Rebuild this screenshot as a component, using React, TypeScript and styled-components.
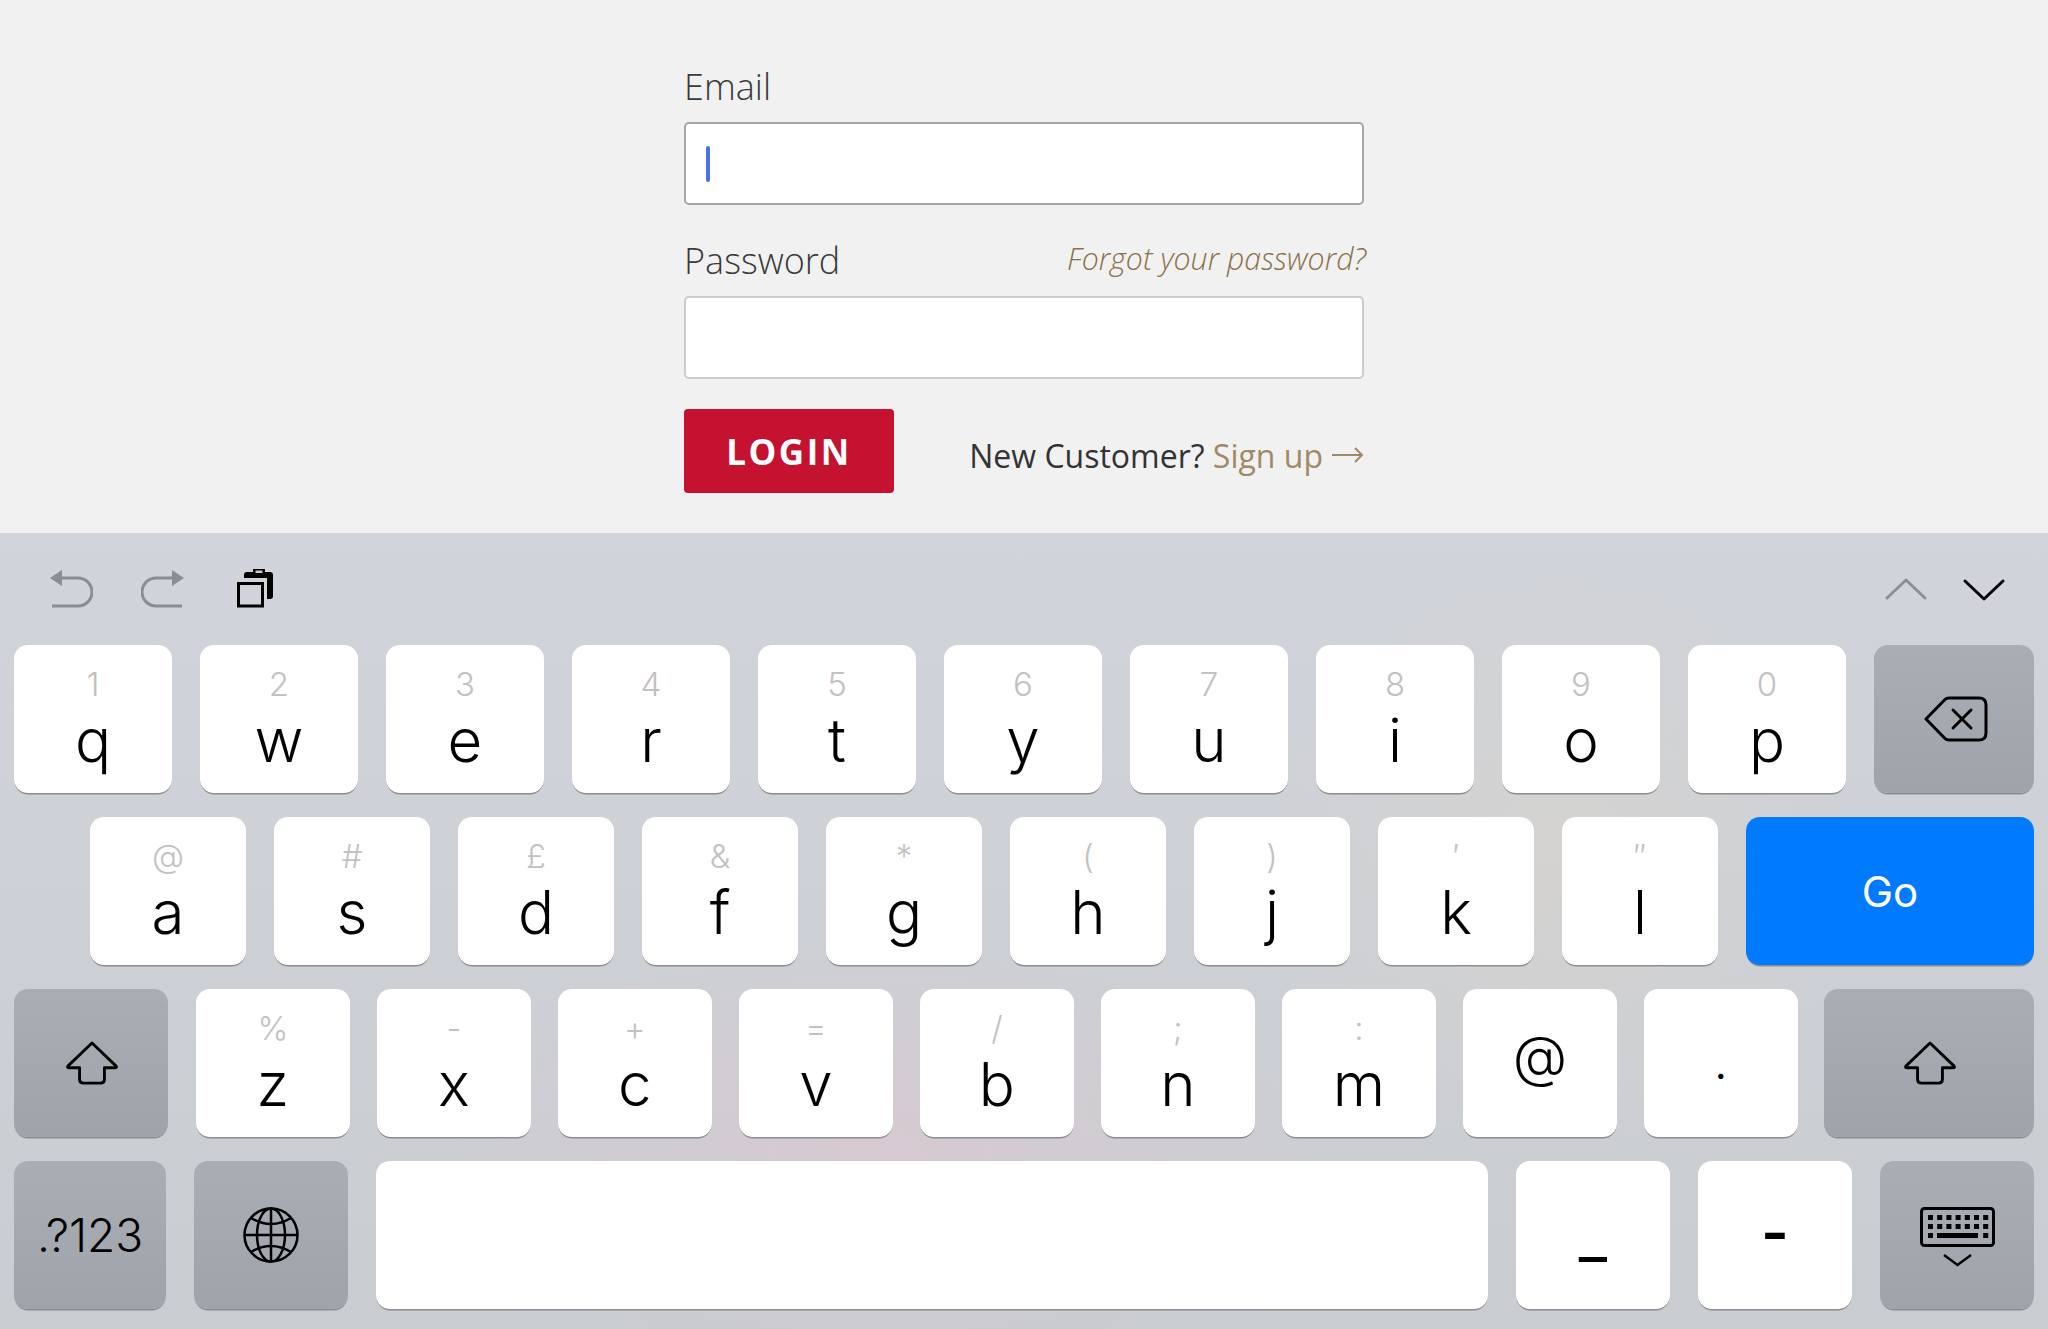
import React from "react";
import styled, { createGlobalStyle } from "styled-components";

const GlobalStyle = createGlobalStyle`
    html, body {
        margin: 0;
        padding: 0;
        background: #f1f1f1;
    }
`;

const Page = styled.div`
    width: 2048px;
    height: 1329px;
    display: flex;
    flex-direction: column;
    overflow: hidden;
`;

const FormArea = styled.div`
    height: 533px;
    background: #f1f1f1;
    display: flex;
    justify-content: center;
    font-family: "Open Sans", sans-serif;
`;

const Form = styled.form`
    width: 680px;
    padding-top: 62px;
`;

const LabelRow = styled.div`
    height: 60px;
    display: flex;
    justify-content: space-between;
    align-items: flex-start;
    margin-right: -2px;
`;

const Label = styled.label`
    font-size: 36px;
    font-weight: 300;
    line-height: 50px;
    color: #3a3a3a;
`;

const ForgotLink = styled.a`
    font-size: 30.3px;
    font-weight: 300;
    font-style: italic;
    line-height: 46px;
    color: #8a7249;
`;

const Field = styled.div<{ $focused?: boolean }>`
    height: 83px;
    box-sizing: border-box;
    border: 2px solid ${(p) => (p.$focused ? "#a6a6a6" : "#cccccc")};
    border-radius: 5px;
    background: #ffffff;
    display: flex;
    align-items: center;
    padding-left: 20px;
    margin-bottom: ${(p) => (p.$focused ? "31px" : "30px")};
`;

const Caret = styled.div`
    width: 4px;
    height: 36px;
    border-radius: 2px;
    background: #4a6ff0;
`;

const FormFooter = styled.div`
    display: flex;
    justify-content: space-between;
    align-items: center;
`;

const LoginButton = styled.button`
    width: 210px;
    height: 84px;
    border: 0;
    border-radius: 4px;
    background: #c41230;
    color: #ffffff;
    font-family: inherit;
    font-size: 35px;
    font-weight: 700;
    letter-spacing: 2.5px;
`;

const SignUpText = styled.div`
    font-size: 32px;
    font-weight: 400;
    color: #333333;
    display: flex;
    align-items: center;
    gap: 9px;
    padding-top: 8px;
`;

const SignUpLink = styled.a`
    color: #a08a66;
`;

const Keyboard = styled.div`
    flex: 1;
    display: flex;
    flex-direction: column;
    font-family: Inter, "Liberation Sans", sans-serif;
    background:
        radial-gradient(ellipse 440px 210px at 880px 620px, rgba(224, 198, 208, 0.6), rgba(224, 198, 208, 0)),
        radial-gradient(ellipse 300px 300px at 1560px 330px, rgba(222, 214, 200, 0.4), rgba(222, 214, 200, 0)),
        linear-gradient(#d1d4da, #c9ccd1);
`;

const Toolbar = styled.div`
    height: 112px;
    display: flex;
    justify-content: space-between;
    align-items: center;
    padding: 0 42px 0 49px;
`;

const ToolGroup = styled.div<{ $gap: number }>`
    display: flex;
    gap: ${(p) => p.$gap}px;
`;

const ToolIcon = styled.svg<{ $flip?: boolean }>`
    width: 44px;
    height: 44px;
    display: block;
    transform: ${(p) => (p.$flip ? "scaleX(-1)" : "none")};
`;

const Rows = styled.div`
    display: flex;
    flex-direction: column;
    gap: 24px;
    padding: 0 14px;
`;

const Row = styled.div<{ $gap: number; $indent?: number }>`
    display: flex;
    gap: ${(p) => p.$gap}px;
    padding-left: ${(p) => p.$indent ?? 0}px;
`;

const Key = styled.div<{ $width: number; $tone?: "plain" | "dark" | "blue"; $after?: number }>`
    width: ${(p) => p.$width}px;
    height: 148px;
    flex: none;
    box-sizing: border-box;
    margin-right: ${(p) => p.$after ?? 0}px;
    border-radius: 14px;
    background: ${(p) =>
        p.$tone === "dark"
            ? "linear-gradient(#a9adb4, #9fa4ab)"
            : p.$tone === "blue"
              ? "#007aff"
              : "#ffffff"};
    box-shadow: 0 2px 0 -0.5px #8c8d90;
    display: flex;
    flex-direction: column;
    align-items: center;
    color: #000000;
`;

const CenterKey = styled(Key)`
    justify-content: center;
`;

const Hint = styled.div`
    height: 40px;
    margin-top: 19px;
    font-size: 33px;
    font-weight: 300;
    line-height: 40px;
    color: #c2c2c2;
`;

const Letter = styled.div`
    font-size: 60px;
    font-weight: 350;
    line-height: 70px;
    margin-top: 1px;
`;

const SymbolGlyph = styled.div<{ $top: number; $size: number; $weight?: number }>`
    margin-top: ${(p) => p.$top}px;
    font-size: ${(p) => p.$size}px;
    font-weight: ${(p) => p.$weight ?? 300};
    line-height: 60px;
`;

const KeyLabel = styled.div<{ $size: number; $color?: string; $weight?: number }>`
    font-size: ${(p) => p.$size}px;
    font-weight: ${(p) => p.$weight ?? 300};
    color: ${(p) => p.$color ?? "#000000"};
`;

const KeyIcon = styled.svg<{ $width: number; $height: number; $shift?: number }>`
    width: ${(p) => p.$width}px;
    height: ${(p) => p.$height}px;
    display: block;
    margin-left: ${(p) => p.$shift ?? 0}px;
`;

const ROW_ONE = [
    ["1", "q"], ["2", "w"], ["3", "e"], ["4", "r"], ["5", "t"],
    ["6", "y"], ["7", "u"], ["8", "i"], ["9", "o"], ["0", "p"],
];
const ROW_TWO = [
    ["@", "a"], ["#", "s"], ["£", "d"], ["&", "f"], ["*", "g"],
    ["(", "h"], [")", "j"], ["′", "k"], ["″", "l"],
];
const ROW_THREE = [
    ["%", "z"], ["-", "x"], ["+", "c"], ["=", "v"], ["/", "b"], [";", "n"], [":", "m"],
];

function UndoIcon(props: { flip?: boolean }) {
    return (
        <ToolIcon viewBox="0 0 44 44" $flip={props.flip}>
            <path d="M1 11 L13 3 V19 Z" fill="#8a8e92" />
            <path d="M12 11 H29 A14 14 0 0 1 29 39 H3" fill="none" stroke="#8a8e92" strokeWidth="3" />
        </ToolIcon>
    );
}

function PasteIcon() {
    return (
        <ToolIcon viewBox="0 0 44 44">
            <path d="M11 11 V8 a3 3 0 0 1 3 -3 H37 a3 3 0 0 1 3 3 V29 a3 3 0 0 1 -3 3 H34 V11 Z" fill="#000" />
            <rect x="20" y="2" width="12" height="6" fill="#000" />
            <rect x="22.5" y="3.5" width="7" height="2.5" fill="#c9ccd2" />
            <rect x="5.5" y="16.5" width="24" height="22.5" fill="none" stroke="#000" strokeWidth="3" />
        </ToolIcon>
    );
}

function Chevron(props: { up?: boolean; color: string }) {
    return (
        <ToolIcon viewBox="0 0 44 44">
            <path
                d={props.up ? "M3 21 L22 3 L41 21" : "M3 3 L22 21 L41 3"}
                transform={props.up ? "translate(0 10)" : "translate(0 11)"}
                fill="none"
                stroke={props.color}
                strokeWidth="3"
                strokeLinecap="round"
                strokeLinejoin="round"
            />
        </ToolIcon>
    );
}

function DeleteIcon() {
    return (
        <KeyIcon $width={64} $height={48} $shift={4} viewBox="0 0 64 48">
            <path
                d="M2 24 L21 4.5 Q22.5 3 25 3 H55 Q62 3 62 10 V38 Q62 45 55 45 H25 Q22.5 45 21 43.5 Z"
                fill="none"
                stroke="#000"
                strokeWidth="3"
                strokeLinejoin="round"
            />
            <path d="M29 15 L47 33 M47 15 L29 33" stroke="#000" strokeWidth="3" strokeLinecap="round" />
        </KeyIcon>
    );
}

function ShiftIcon() {
    return (
        <KeyIcon $width={52} $height={44} $shift={2} viewBox="0 0 54 46">
            <path
                d="M27 2 L52 26 Q53.5 28 51 28 H40 V40 Q40 44 36 44 H18 Q14 44 14 40 V28 H3 Q0.5 28 2 26 Z"
                fill="none"
                stroke="#000"
                strokeWidth="3"
                strokeLinejoin="round"
            />
        </KeyIcon>
    );
}

function GlobeIcon() {
    return (
        <KeyIcon $width={58} $height={58} viewBox="0 0 58 58">
            <g fill="none" stroke="#000" strokeWidth="2.5">
                <circle cx="29" cy="29" r="26.5" />
                <ellipse cx="29" cy="29" rx="14" ry="26.5" />
                <path d="M29 2.5 V55.5 M2.5 29 H55.5" />
                <path d="M9 12 Q29 24 49 12 M9 46 Q29 34 49 46" />
            </g>
        </KeyIcon>
    );
}

function KeyboardIcon() {
    const cols = [0, 1, 2, 3, 4, 5, 6];
    return (
        <KeyIcon $width={78} $height={64} viewBox="0 -2 78 64">
            <rect x="3.5" y="3.5" width="72" height="37" rx="3" fill="none" stroke="#000" strokeWidth="3" />
            {cols.map((c) => (
                <React.Fragment key={c}>
                    <rect x={10 + c * 9.2} y="10" width="5" height="5" />
                    <rect x={10 + c * 9.2} y="19" width="5" height="5" />
                </React.Fragment>
            ))}
            <rect x="10" y="28" width="5" height="5" />
            <rect x="19" y="28" width="41" height="5" />
            <rect x="65.2" y="28" width="5" height="5" />
            <path d="M26 50 L39.5 60 L53 50" fill="none" stroke="#000" strokeWidth="2.5" />
        </KeyIcon>
    );
}

function LetterKey(props: { hint: string; letter: string; width: number }) {
    return (
        <Key $width={props.width}>
            <Hint>{props.hint}</Hint>
            <Letter>{props.letter}</Letter>
        </Key>
    );
}

export default function App(): JSX.Element {
    return (
        <Page>
            <GlobalStyle />
            <FormArea>
                <Form>
                    <LabelRow>
                        <Label>Email</Label>
                    </LabelRow>
                    <Field $focused>
                        <Caret />
                    </Field>
                    <LabelRow>
                        <Label>Password</Label>
                        <ForgotLink>Forgot your password?</ForgotLink>
                    </LabelRow>
                    <Field />
                    <FormFooter>
                        <LoginButton type="button">LOGIN</LoginButton>
                        <SignUpText>
                            <span>
                                New Customer? <SignUpLink>Sign up</SignUpLink>
                            </span>
                            <svg width="32" height="20" viewBox="0 0 32 20">
                                <path d="M0 10 H30 M23 3 L30 10 L23 17" fill="none" stroke="#a08a66" strokeWidth="2" />
                            </svg>
                        </SignUpText>
                    </FormFooter>
                </Form>
            </FormArea>
            <Keyboard>
                <Toolbar>
                    <ToolGroup $gap={48}>
                        <UndoIcon />
                        <UndoIcon flip />
                        <PasteIcon />
                    </ToolGroup>
                    <ToolGroup $gap={34}>
                        <Chevron up color="#8c8f94" />
                        <Chevron color="#000000" />
                    </ToolGroup>
                </Toolbar>
                <Rows>
                    <Row $gap={28}>
                        {ROW_ONE.map(([hint, letter]) => (
                            <LetterKey key={letter} hint={hint} letter={letter} width={158} />
                        ))}
                        <CenterKey $width={160} $tone="dark">
                            <DeleteIcon />
                        </CenterKey>
                    </Row>
                    <Row $gap={28} $indent={76}>
                        {ROW_TWO.map(([hint, letter]) => (
                            <LetterKey key={letter} hint={hint} letter={letter} width={156} />
                        ))}
                        <CenterKey $width={288} $tone="blue">
                            <KeyLabel $size={42} $color="#ffffff" $weight={400}>Go</KeyLabel>
                        </CenterKey>
                    </Row>
                    <Row $gap={27.25}>
                        <CenterKey $width={154} $after={0.75} $tone="dark">
                            <ShiftIcon />
                        </CenterKey>
                        {ROW_THREE.map(([hint, letter]) => (
                            <LetterKey key={letter} hint={hint} letter={letter} width={153.75} />
                        ))}
                        <Key $width={153.75}>
                            <SymbolGlyph $top={37} $size={56} $weight={350}>@</SymbolGlyph>
                        </Key>
                        <Key $width={153.75} $after={-1}>
                            <SymbolGlyph $top={46} $size={40} $weight={400}>.</SymbolGlyph>
                        </Key>
                        <CenterKey $width={210} $tone="dark">
                            <ShiftIcon />
                        </CenterKey>
                    </Row>
                    <Row $gap={28}>
                        <CenterKey $width={152} $tone="dark">
                            <KeyLabel $size={46}>.?123</KeyLabel>
                        </CenterKey>
                        <CenterKey $width={154} $tone="dark">
                            <GlobeIcon />
                        </CenterKey>
                        <Key $width={1112} />
                        <Key $width={154}>
                            <SymbolGlyph $top={44} $size={62} $weight={400}>_</SymbolGlyph>
                        </Key>
                        <Key $width={154}>
                            <SymbolGlyph $top={41} $size={60} $weight={600}>-</SymbolGlyph>
                        </Key>
                        <CenterKey $width={154} $tone="dark">
                            <KeyboardIcon />
                        </CenterKey>
                    </Row>
                </Rows>
            </Keyboard>
        </Page>
    );
}
